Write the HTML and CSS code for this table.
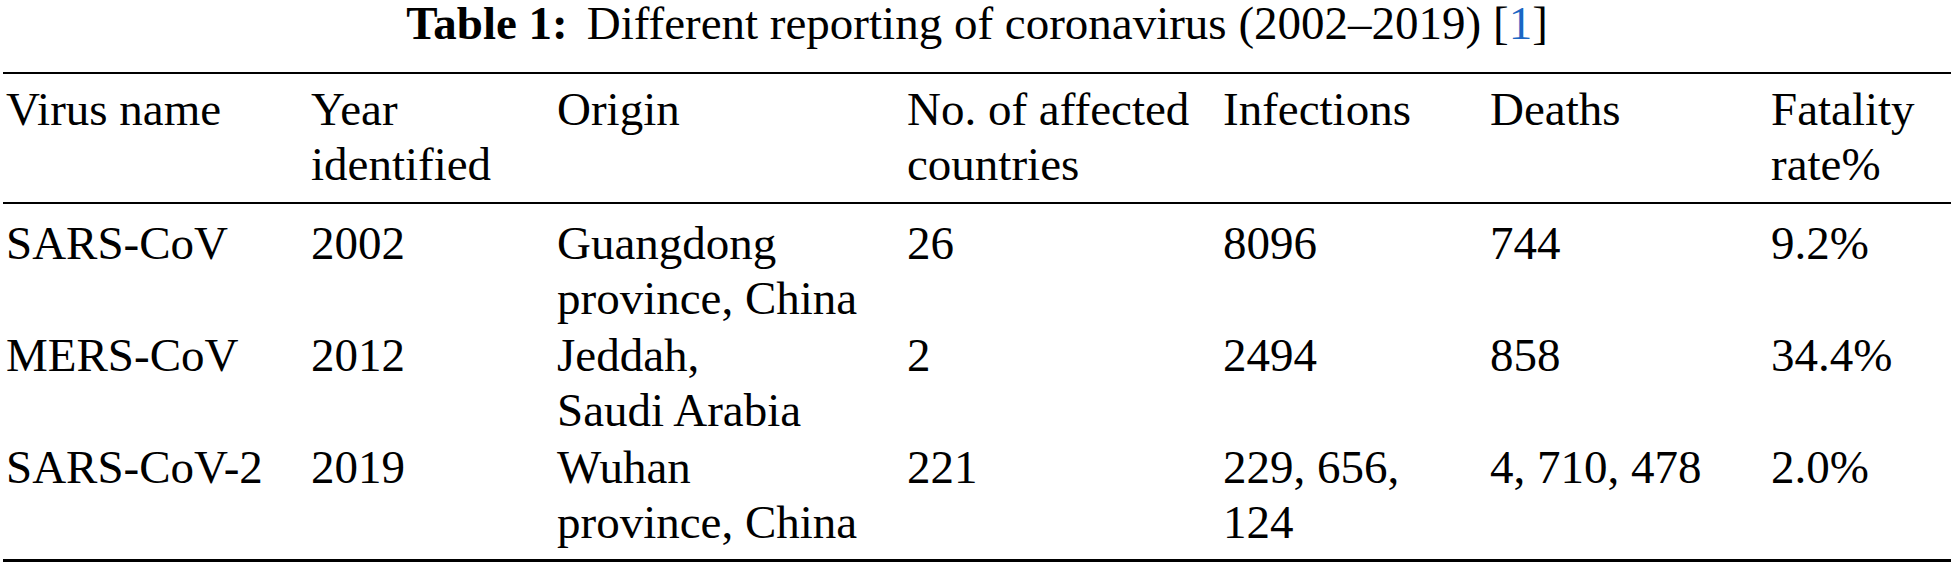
FILE: index.html
```html
<!DOCTYPE html>
<html lang="en">
<head>
<meta charset="utf-8">
<title>Table 1</title>
<link rel="stylesheet" href="styles.css">
</head>
<body>
<div class="page">
  <div class="caption"><span class="label">Table 1:</span>Different reporting of coronavirus (2002–2019) [<a class="ref" href="#">1</a>]</div>
  <table class="data">
    <colgroup>
      <col class="c1"><col class="c2"><col class="c3"><col class="c4"><col class="c5"><col class="c6"><col class="c7">
    </colgroup>
    <thead>
      <tr>
        <th>Virus name</th>
        <th>Year<br>identified</th>
        <th>Origin</th>
        <th>No. of affected<br>countries</th>
        <th>Infections</th>
        <th>Deaths</th>
        <th>Fatality<br>rate%</th>
      </tr>
    </thead>
    <tbody>
      <tr class="first">
        <td>SARS-CoV</td>
        <td>2002</td>
        <td>Guangdong<br>province, China</td>
        <td>26</td>
        <td>8096</td>
        <td>744</td>
        <td>9.2%</td>
      </tr>
      <tr>
        <td>MERS-CoV</td>
        <td>2012</td>
        <td>Jeddah,<br>Saudi Arabia</td>
        <td>2</td>
        <td>2494</td>
        <td>858</td>
        <td>34.4%</td>
      </tr>
      <tr class="last">
        <td>SARS-CoV-2</td>
        <td>2019</td>
        <td>Wuhan<br>province, China</td>
        <td>221</td>
        <td>229, 656,<br>124</td>
        <td>4, 710, 478</td>
        <td>2.0%</td>
      </tr>
    </tbody>
  </table>
</div>
</body>
</html>
```
FILE: styles.css
```css
html, body {
  margin: 0;
  padding: 0;
  background: #ffffff;
}

.page {
  width: 1954px;
  font-family: "Liberation Serif", "Times New Roman", serif;
  font-size: 47px;
  color: #000000;
}

.caption {
  text-align: center;
  line-height: 42px;
  padding-top: 2px;
  height: 40px;
  margin: 0 0 30px 0;
  white-space: nowrap;
}

.caption .label {
  font-weight: bold;
  margin-right: 19px;
}

.caption .ref {
  color: #1a67c4;
  text-decoration: none;
}

.data {
  margin-left: 3px;
  width: 1948px;
  table-layout: fixed;
  border-collapse: collapse;
  border-spacing: 0;
  border-top: 2px solid #000;
  border-bottom: 3px solid #000;
  line-height: 55px;
  font-family: inherit;
  font-size: inherit;
}

.c1 { width: 305px; }
.c2 { width: 246px; }
.c3 { width: 350px; }
.c4 { width: 316px; }
.c5 { width: 267px; }
.c6 { width: 281px; }
.c7 { width: 183px; }

.data th,
.data td {
  text-align: left;
  vertical-align: top;
  font-weight: normal;
  padding: 1px 0 1px 3px;
  white-space: nowrap;
}

.data thead th {
  padding-top: 8px;
  padding-bottom: 10px;
  border-bottom: 2px solid #000;
}

.data tbody tr.first td {
  padding-top: 12px;
}

.data tbody tr.last td {
  padding-bottom: 9px;
}
```
